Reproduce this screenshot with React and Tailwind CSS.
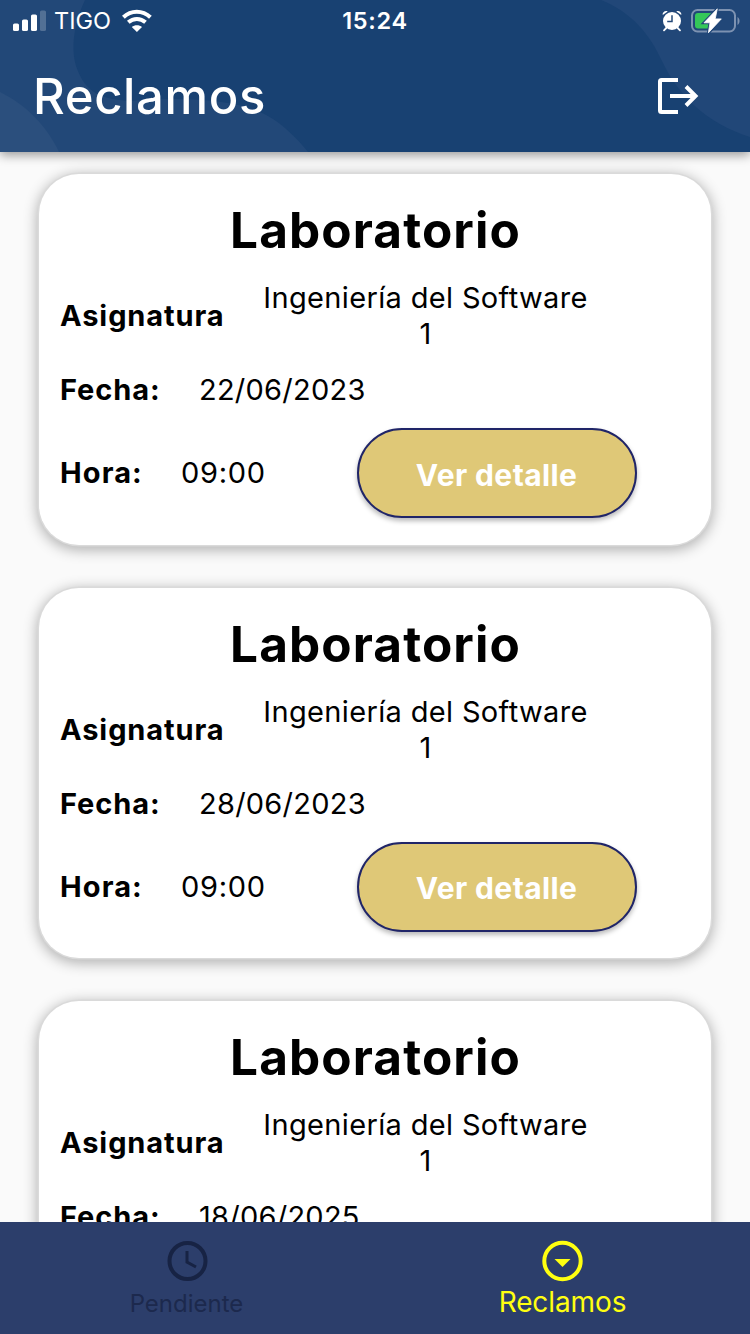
const claims = [
  { title: 'Laboratorio', subject: 'Ingeniería del Software 1', date: '22/06/2023', time: '09:00' },
  { title: 'Laboratorio', subject: 'Ingeniería del Software 1', date: '28/06/2023', time: '09:00' },
  { title: 'Laboratorio', subject: 'Ingeniería del Software 1', date: '18/06/2025', time: '09:00' },
];

function HeaderBackdrop() {
  return (
    <svg className="absolute inset-0 h-full w-full" viewBox="0 0 750 152" preserveAspectRatio="none" aria-hidden="true">
      <rect width="750" height="152" fill="#184172" />
      <path d="M0 0H85C73 25 71 50 76 66C84 88 94 99 130 101C190 96 245 100 273 119C288 129 299 141 308 152H0Z" fill="#224878" />
      <path d="M0 92C28 106 47 127 59 152H0Z" fill="#2b4f7d" />
      <path d="M601 0C633 13 650 35 662 61C678 95 706 123 750 137V0Z" fill="#214778" />
    </svg>
  );
}

function StatusBar() {
  return (
    <div className="relative grid h-10 grid-cols-3 items-center text-white">
      <div className="flex items-center pl-[13px]">
        <svg width="33" height="22" viewBox="0 0 33 22" fill="white">
          <rect x="0" y="13.5" width="6" height="7.5" rx="1.6" />
          <rect x="9" y="9.5" width="6" height="11.5" rx="1.6" />
          <rect x="18" y="4.5" width="6" height="16.5" rx="1.6" />
          <rect x="27" y="0.5" width="6" height="20.5" rx="1.6" opacity="0.22" />
        </svg>
        <span className="ml-[8px] w-[58px] pt-px text-[23.5px] leading-10 whitespace-nowrap">TIGO</span>
        <svg className="ml-[9px]" width="32" height="24" viewBox="0 0 32 24" fill="none" stroke="white" strokeWidth="4">
          <path d="M2.4 8.3C10 1 21.5 1 29.4 8.3" />
          <path d="M7.3 13.2C12.4 8.8 19.4 8.8 24.5 13.2" />
          <path d="M15.9 23L10.8 18C13.5 15.5 18.4 15.5 21 18Z" fill="white" stroke="none" />
        </svg>
      </div>
      <span className="pt-px text-center text-[23.5px] leading-10 font-semibold tracking-[0.7px]">15:24</span>
      <div className="flex items-center justify-end pr-[10px]">
        <svg width="20" height="22" viewBox="0 0 20 22">
          <circle cx="10" cy="11" r="9" fill="white" />
          <path d="M0.7 4.9C0.2 2.3 3.3 0.2 5.7 1.5ZM19.3 4.9C19.8 2.3 16.7 0.2 14.3 1.5Z" fill="white" />
          <path d="M4.3 18L2 20.3M15.7 18L18 20.3" stroke="white" strokeWidth="1.8" strokeLinecap="round" />
          <path d="M10 5.2V11.4H5.2" fill="none" stroke="#244978" strokeWidth="1.5" />
        </svg>
        <svg className="ml-[9px]" width="49" height="26" viewBox="0 0 49 26">
          <rect x="1" y="2" width="43" height="21.5" rx="5.5" fill="none" stroke="#7d92b1" strokeWidth="2" />
          <path d="M46.5 9V17C49.2 15.6 49.2 10.4 46.5 9Z" fill="#7d92b1" />
          <rect x="4" y="5" width="18" height="15.5" rx="3" fill="#34c759" />
          <path d="M26.3 0.8L13 14.8H19L17.4 24.8L30.3 10.9H24.2Z" fill="#214778" stroke="#214778" strokeWidth="3" />
          <path d="M26.3 0.8L13 14.8H19L17.4 24.8L30.3 10.9H24.2Z" fill="white" stroke="white" strokeWidth="0.8" strokeLinejoin="round" />
        </svg>
      </div>
    </div>
  );
}

function LogoutIcon() {
  return (
    <svg width="42" height="38" viewBox="0 0 42 38" fill="none" stroke="white" strokeWidth="4">
      <path d="M21 3H4.5Q3 3 3 4.5V33.5Q3 35 4.5 35H21" />
      <path d="M13 19H38.5M29 9.5L38.5 19L29 28.5" />
    </svg>
  );
}

function ClaimCard({ claim }) {
  return (
    <article className="h-[370.5px] shrink-0 rounded-[40px] bg-white px-[21px] pt-[26px] shadow-[0_0_0_1.5px_#dadada,0_3px_14px_2px_rgba(0,0,0,0.3)]">
      <h2 className="pl-px text-center text-[49.5px] leading-[60px] font-bold tracking-[1.1px]">{claim.title}</h2>
      <div className="mt-5 flex h-[72px] items-center">
        <span className="w-[198px] text-[29px] font-bold tracking-[0.9px]">Asignatura</span>
        <span className="w-[335px] text-center text-[29px] leading-9 tracking-[0.35px]">{claim.subject}</span>
      </div>
      <div className="mt-5 flex h-9 items-center text-[29px]">
        <span className="w-[139px] font-bold tracking-[0.9px]">Fecha:</span>
        <span className="tracking-[0.25px]">{claim.date}</span>
      </div>
      <div className="mt-5 flex h-[90px] items-center text-[29px]">
        <span className="w-[121px] font-bold tracking-[1.1px]">Hora:</span>
        <span className="w-[176px] tracking-[0.7px]">{claim.time}</span>
        <button className="h-[90px] w-[280px] rounded-full border-2 border-[#202568] bg-[#dfc877] pt-1 pr-px text-[30px] font-bold tracking-[0.4px] text-white shadow-[0_3px_5px_rgba(0,0,0,0.28)]">
          Ver detalle
        </button>
      </div>
    </article>
  );
}

function BottomNav() {
  return (
    <nav className="relative grid h-28 shrink-0 grid-cols-2 bg-[#2c3e6b]">
      <div className="flex flex-col items-center pt-[18px] text-[#172344]">
        <svg width="42" height="42" viewBox="0 0 42 42" fill="none" stroke="currentColor" strokeWidth="4">
          <circle cx="20.5" cy="21" r="18" />
          <path d="M20 11V22L29 27" strokeWidth="3" />
        </svg>
        <span className="mt-[7px] pr-0.5 text-[24px] leading-[30px] text-[#1c294d]">Pendiente</span>
      </div>
      <div className="flex flex-col items-center pt-[18px] text-[#ffff10]">
        <svg width="42" height="42" viewBox="0 0 42 42" fill="none" stroke="currentColor" strokeWidth="4">
          <circle cx="20.5" cy="21" r="18.2" />
          <path d="M12.5 19H28.5L20.5 27Z" fill="currentColor" stroke="none" />
        </svg>
        <span className="mt-[3px] text-[28px] leading-[34px] tracking-[-0.1px]">Reclamos</span>
      </div>
    </nav>
  );
}

export default function App() {
  return (
    <div className="flex h-[1334px] w-[750px] flex-col overflow-hidden bg-[#fafafa] font-['Inter','Liberation_Sans',sans-serif] text-black">
      <header className="relative z-10 h-[152px] shrink-0 shadow-[0_3px_10px_rgba(0,0,0,0.4)]">
        <HeaderBackdrop />
        <StatusBar />
        <div className="relative flex h-28 items-center justify-between pr-[51px] pl-[33px] text-white">
          <h1 className="pt-0.5 text-[49px] leading-[60px] font-medium tracking-[0.65px]">Reclamos</h1>
          <LogoutIcon />
        </div>
      </header>
      <main className="flex min-h-0 flex-1 flex-col gap-[43px] overflow-hidden px-[39px] pt-[22px]">
        {claims.map((claim, i) => (
          <ClaimCard key={i} claim={claim} />
        ))}
      </main>
      <BottomNav />
    </div>
  );
}
